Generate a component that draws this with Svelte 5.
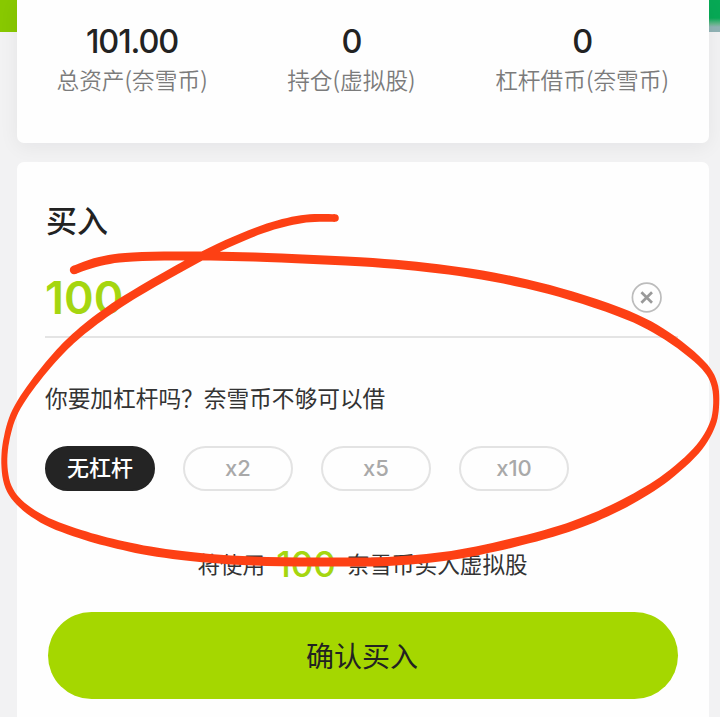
<script>
  const stats = [
    { value: '101.00', label: '总资产(奈雪币)' },
    { value: '0', label: '持仓(虚拟股)' },
    { value: '0', label: '杠杆借币(奈雪币)' }
  ];
  const levers = ['无杠杆', 'x2', 'x5', 'x10'];
  let selected = $state(0);

  // Marker stroke: x, y, pen width
  const pen = [
    [335, 218, 7.5], [310, 218.2, 8], [283, 223, 8], [250, 234, 8], [200, 257, 8.5],
    [133, 295, 8.5], [100, 317, 8.5], [75, 337, 8], [56, 356, 7.5], [33, 384, 7],
    [15.5, 411, 6.5], [7, 437, 6.2], [4.3, 463, 6], [8.5, 487, 6.5], [22, 505, 7],
    [47, 521.5, 8], [80, 534, 8.5], [112, 543, 8.7], [150, 551, 9], [200, 557.5, 9],
    [267, 561.5, 9], [360, 562, 9], [410, 560, 9], [460, 554, 9], [510, 543.5, 9],
    [560, 530, 9], [600, 515, 9], [636, 497, 8.7], [667, 477, 8], [696, 451, 7.3],
    [711, 428, 6.5], [716, 407, 6], [714, 383, 6.5], [701, 363, 7.3], [667, 336, 8.7],
    [627, 315, 9], [560, 292.5, 9], [493, 277, 9], [427, 267.5, 9], [360, 261.8, 9],
    [267, 257.5, 9], [200, 256, 9], [133, 257, 9], [100, 261.3, 9], [74, 270, 8.5]
  ];

  function outline(points) {
    const samples = [];
    for (let i = 0; i < points.length - 1; i++) {
      const a = points[Math.max(0, i - 1)];
      const b = points[i];
      const c = points[i + 1];
      const d = points[Math.min(points.length - 1, i + 2)];
      for (let s = 0; s < 6; s++) {
        const t = s / 6;
        samples.push([0, 1, 2].map((k) =>
          0.5 * (2 * b[k] + (c[k] - a[k]) * t +
            (2 * a[k] - 5 * b[k] + 4 * c[k] - d[k]) * t * t +
            (3 * b[k] - a[k] - 3 * c[k] + d[k]) * t * t * t)));
      }
    }
    samples.push(points[points.length - 1]);
    const left = [];
    const right = [];
    samples.forEach(([x, y, w], i) => {
      const p = samples[Math.max(0, i - 1)];
      const n = samples[Math.min(samples.length - 1, i + 1)];
      const len = Math.hypot(n[0] - p[0], n[1] - p[1]);
      const nx = (-(n[1] - p[1]) / len) * w / 2;
      const ny = ((n[0] - p[0]) / len) * w / 2;
      left.push(`${(x + nx).toFixed(1)} ${(y + ny).toFixed(1)}`);
      right.unshift(`${(x - nx).toFixed(1)} ${(y - ny).toFixed(1)}`);
    });
    return `M${[...left, ...right].join('L')}Z`;
  }
  const marker = outline(pen);
</script>

<main class="page">
  <div class="banner"></div>
  <section class="card summary">
    {#each stats as s}
      <div class="stat">
        <strong>{s.value}</strong>
        <span>{s.label}</span>
      </div>
    {/each}
  </section>

  <section class="card trade">
    <h1>买入</h1>
    <div class="amount">
      <span class="number">100</span>
      <button class="clear" aria-label="清除">
        <svg width="32" height="32" viewBox="0 0 32 32" fill="none">
          <circle cx="15.7" cy="15.5" r="14.3" stroke="#bcbcbc" stroke-width="1.7" />
          <path d="M10.4 10.2 21 20.8M21 10.2 10.4 20.8" stroke="#999" stroke-width="2.7" />
        </svg>
      </button>
    </div>
    <p class="question">你要加杠杆吗？奈雪币不够可以借</p>
    <div class="levers">
      {#each levers as l, i}
        <button class="lever" class:active={selected === i} onclick={() => (selected = i)}>{l}</button>
      {/each}
    </div>
    <p class="usage"><span>将使用</span><b>100</b><span>奈雪币买入虚拟股</span></p>
    <button class="confirm">确认买入</button>
  </section>

  <svg class="marker" width="720" height="717" viewBox="0 0 720 717">
    <path d={marker} fill="#fd4014" />
    <circle cx="335" cy="218" r="3.8" fill="#fd4014" />
    <circle cx="74" cy="270" r="4.2" fill="#fd4014" />
  </svg>
</main>

<style>
  :global(body) { margin: 0; }
  .page {
    position: relative;
    box-sizing: border-box;
    width: 720px;
    height: 717px;
    padding: 0 11px 0 17px;
    overflow: hidden;
    background: #f2f2f3;
    color: #222;
    font-family: Inter, "Noto Sans CJK SC", sans-serif;
  }
  .banner {
    position: absolute;
    top: 0;
    left: 0;
    width: 720px;
    height: 32px;
    background:
      linear-gradient(#07a955 0 18px, #67b68d 24px, #91b3b5 27px) right / 20px 32px no-repeat,
      #88c800;
  }
  .card { position: relative; box-sizing: border-box; background: #fefefe; }
  .summary {
    display: flex;
    justify-content: space-between;
    height: 143px;
    border-radius: 0 0 7px 7px;
    padding: 22px 40px 0 39.5px;
    box-shadow: 0 4px 20px rgba(20, 25, 35, .06);
  }
  .stat { display: flex; flex-direction: column; align-items: center; }
  .stat strong { font: 500 32.5px/40px Inter, sans-serif; letter-spacing: -1.1px; }
  .stat span {
    margin-top: 1px;
    font: 350 22.7px/34px "Noto Sans CJK SC", sans-serif;
    color: #7b7b7b;
    white-space: nowrap;
  }
  .trade {
    display: flex;
    flex-direction: column;
    height: 560px;
    margin-top: 19px;
    padding: 34px 31px 0 28px;
    border-radius: 7px 7px 0 0;
  }
  h1 { margin: 0 0 0 1px; font: 500 31px/46px "Noto Sans CJK SC", sans-serif; }
  .amount {
    display: flex;
    align-items: center;
    justify-content: space-between;
    box-sizing: border-box;
    width: 633px;
    height: 81px;
    margin-top: 15px;
    padding: 2px 15px 0 0;
    border-bottom: 2px solid #e4e4e4;
  }
  .number { font-size: 45px; line-height: 54px; font-weight: 600; color: #a5d610; }
  button { border: 0; padding: 0; margin: 0; background: none; }
  .clear { width: 32px; height: 32px; }
  .clear svg { display: block; }
  .question { margin: 43px 0 0; font: 400 22.7px/34px "Noto Sans CJK SC", sans-serif; color: #333; }
  .levers { display: flex; gap: 28px; margin-top: 31px; }
  .lever {
    box-sizing: border-box;
    width: 110px;
    height: 45px;
    padding-bottom: 2px;
    border: 2px solid #e3e3e3;
    border-radius: 23px;
    font: 500 22px/38px Inter, "Noto Sans CJK SC", sans-serif;
    color: #a9a9a9;
  }
  .lever.active { background: #242424; border-color: #242424; color: #fff; }
  .usage {
    display: flex;
    align-items: center;
    justify-content: center;
    height: 40px;
    margin: 53px 0 0;
    padding-left: 2px;
    font: 400 22.6px/34px "Noto Sans CJK SC", sans-serif;
    color: #333;
  }
  .usage b { margin: 0 11px; font: 500 35px/40px Inter, sans-serif; color: #a5d610; }
  .confirm {
    width: 630px;
    height: 87px;
    flex: none;
    margin: 28px 0 0 3px;
    padding: 0 2px 2px 0;
    border-radius: 44px;
    background: #a5d700;
    color: #222;
    font: 400 28px/42px "Noto Sans CJK SC", sans-serif;
  }
  .marker { position: absolute; inset: 0; pointer-events: none; }
</style>
